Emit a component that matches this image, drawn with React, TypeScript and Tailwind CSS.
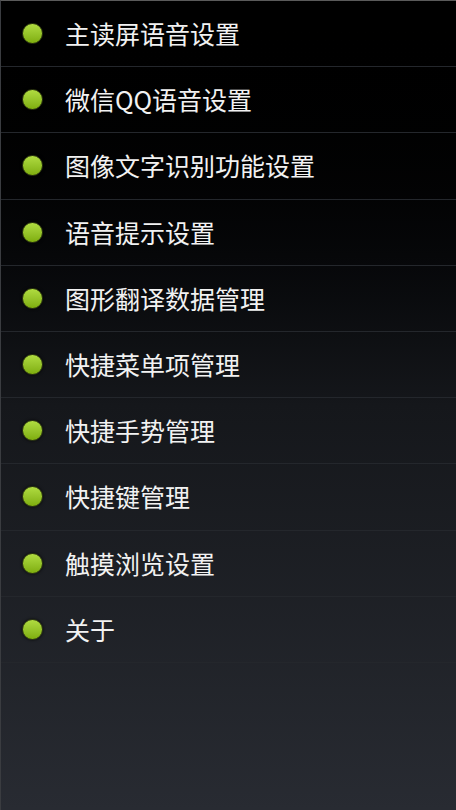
const items = [
  '主读屏语音设置',
  '微信QQ语音设置',
  '图像文字识别功能设置',
  '语音提示设置',
  '图形翻译数据管理',
  '快捷菜单项管理',
  '快捷手势管理',
  '快捷键管理',
  '触摸浏览设置',
  '关于',
];

function Bullet() {
  return (
    <span className="block h-[21px] w-[21px] shrink-0 rounded-full border border-[#2f3a10] bg-gradient-to-b from-[#b0dc40] to-[#7fae0c] shadow-[0_0_3px_rgba(0,0,0,0.8)]" />
  );
}

export default function App() {
  return (
    <div
      className="flex h-[810px] w-[456px] flex-col overflow-hidden border-t border-l border-t-[#5a5a5a] border-l-[#3a3c40] bg-gradient-to-b from-[#000000] via-[#15171b] to-[#282b32] text-white"
      style={{ fontFamily: '"Noto Sans CJK SC", "Liberation Sans", sans-serif' }}
    >
      {items.map((label) => (
        <div
          key={label}
          className="flex h-[66.2px] shrink-0 items-center border-b border-[#24272c] pl-[21px]"
        >
          <Bullet />
          <span className="ml-[22px] text-[25px] leading-none text-[#f2f2f2]">{label}</span>
        </div>
      ))}
    </div>
  );
}
